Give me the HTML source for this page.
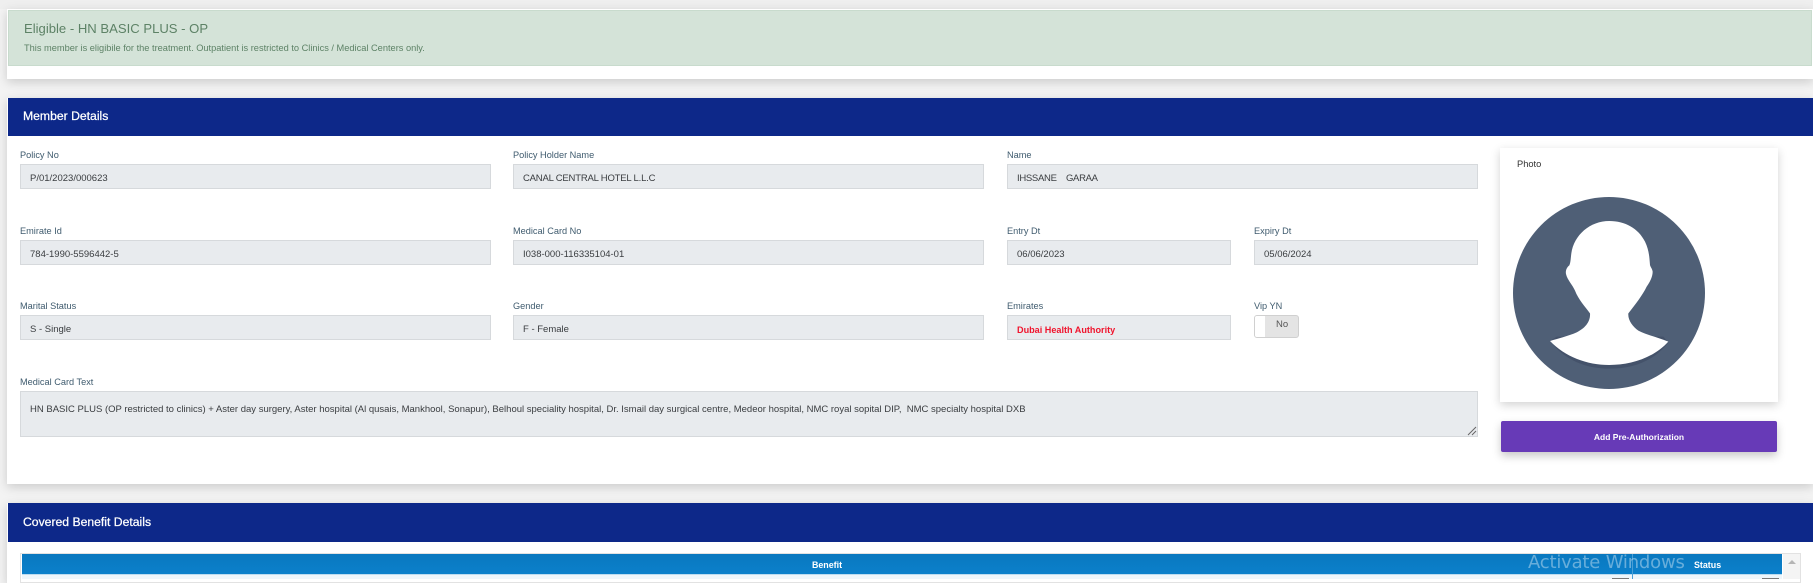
<!DOCTYPE html>
<html><head><meta charset="utf-8"><style>
html,body{margin:0;padding:0;width:1813px;height:579px;overflow:hidden;background:#f3f3f3;font-family:"Liberation Sans",Arial,sans-serif}
div{position:absolute;box-sizing:border-box;white-space:pre}
.card{background:#fff;box-shadow:0 3px 10px rgba(0,0,0,.17)}
.hd{background:#0d2889;left:8px;width:1805px;color:#fff;font-size:12.2px;font-weight:400;-webkit-text-stroke:.25px #fff}
.l{height:12px;line-height:12px;font-size:9.2px;color:#3f5b6e}
.f{background:#e8ebee;border:1px solid #d6d9dc;height:25px;line-height:28px;padding-left:9px;font-size:9.5px;color:#3a3d40}
</style></head><body>

<div style="left:0;top:0;width:1813px;height:9px;background:#efefef"></div>
<div class="card" style="left:7px;top:9px;width:1806px;height:70px"></div>
<div style="left:8px;top:10px;width:1804px;height:56px;background:#d4e3d8;border:1px solid #c8dbcd"></div>
<div style="left:24px;top:20px;height:17px;line-height:17px;font-size:13.1px;color:#5d8266">Eligible - HN BASIC PLUS - OP</div>
<div style="left:24px;top:42px;height:12px;line-height:12px;font-size:9.25px;color:#5d8266">This member is eligibile for the treatment. Outpatient is restricted to Clinics / Medical Centers only.</div>

<div class="card" style="left:7px;top:98px;width:1806px;height:386px"></div>
<div class="hd" style="top:98px;height:38px;line-height:37px;padding-left:15px">Member Details</div>

<div class="l" style="left:20px;top:149px">Policy No</div>
<div class="f" style="left:20px;top:164px;width:471px">P/01/2023/000623</div>
<div class="l" style="left:513px;top:149px">Policy Holder Name</div>
<div class="f" style="left:513px;top:164px;width:471px;letter-spacing:-.2px">CANAL CENTRAL HOTEL L.L.C</div>
<div class="l" style="left:1007px;top:149px">Name</div>
<div class="f" style="left:1007px;top:164px;width:471px;letter-spacing:-.3px">IHSSANE    GARAA</div>

<div class="l" style="left:20px;top:225px">Emirate Id</div>
<div class="f" style="left:20px;top:240px;width:471px">784-1990-5596442-5</div>
<div class="l" style="left:513px;top:225px">Medical Card No</div>
<div class="f" style="left:513px;top:240px;width:471px">I038-000-116335104-01</div>
<div class="l" style="left:1007px;top:225px">Entry Dt</div>
<div class="f" style="left:1007px;top:240px;width:224px">06/06/2023</div>
<div class="l" style="left:1254px;top:225px">Expiry Dt</div>
<div class="f" style="left:1254px;top:240px;width:224px">05/06/2024</div>

<div class="l" style="left:20px;top:300px">Marital Status</div>
<div class="f" style="left:20px;top:315px;width:471px">S - Single</div>
<div class="l" style="left:513px;top:300px">Gender</div>
<div class="f" style="left:513px;top:315px;width:471px">F - Female</div>
<div class="l" style="left:1007px;top:300px">Emirates</div>
<div class="f" style="left:1007px;top:315px;width:224px;color:#f0142d;font-weight:bold;font-size:9.1px">Dubai Health Authority</div>
<div class="l" style="left:1254px;top:300px">Vip YN</div>
<div style="left:1254px;top:315px;width:45px;height:23px;background:#e4e4e4;border:1px solid #d0d0d0;border-radius:3px;font-size:9.5px;color:#555;line-height:18px;padding-left:21px">No</div>
<div style="left:1255px;top:316px;width:10px;height:21px;background:#fff;border-radius:2px 0 0 2px"></div>

<div class="l" style="left:20px;top:376px">Medical Card Text</div>
<div class="f" style="left:20px;top:391px;width:1458px;height:46px;line-height:13px;padding-top:11px">HN BASIC PLUS (OP restricted to clinics) + Aster day surgery, Aster hospital (Al qusais, Mankhool, Sonapur), Belhoul speciality hospital, Dr. Ismail day surgical centre, Medeor hospital, NMC royal sopital DIP,  NMC specialty hospital DXB</div>
<svg style="position:absolute;left:1467px;top:426px" width="10" height="10" viewBox="0 0 10 10"><path d="M1 9L9 1M5 9L9 5" stroke="#666" stroke-width="1" fill="none"/></svg>

<div style="left:1500px;top:148px;width:278px;height:254px;background:#fff;box-shadow:0 3px 9px rgba(0,0,0,.18)"></div>
<div style="left:1517px;top:158px;height:12px;line-height:12px;font-size:9.3px;color:#333">Photo</div>
<svg style="position:absolute;left:1450px;top:140px" width="363" height="330" viewBox="0 0 1089 990">
<circle cx="477" cy="459" r="288" fill="#4f5f76"/>
<path d="M300 603C345 662 410 686 478 686C545 686 610 666 655 607L640 590L320 590Z" fill="#44526a"/>
<path d="M478 243C420 243 372 285 364 340C362 355 362 368 358 376C350 382 346 392 348 402C352 420 368 435 375 452C385 478 405 500 420 520C422 545 405 565 380 577C355 588 325 595 300 603C345 650 410 675 478 675C540 675 610 655 655 605C625 592 590 585 565 572C548 560 533 540 535 520C555 495 578 465 590 440C598 428 608 412 608 395C606 385 601 380 600 375C598 350 597 330 585 305C565 265 525 243 478 243Z" fill="#fff"/>
</svg>
<div style="left:1501px;top:421px;width:276px;height:31px;background:#673ab7;border-radius:2px;box-shadow:0 4px 9px rgba(0,0,0,.22);color:#fff;font-size:8.5px;font-weight:bold;text-align:center;line-height:33px">Add Pre-Authorization</div>

<div class="card" style="left:7px;top:503px;width:1806px;height:80px"></div>
<div class="hd" style="top:503px;height:39px;line-height:38px;padding-left:15px">Covered Benefit Details</div>
<div style="left:20px;top:553px;width:1781px;height:30px;border:1px solid #e2e2e2;background:#fff"></div>
<div style="left:22px;top:554px;width:1760px;height:20px;background:linear-gradient(#0a78bf,#0b80cb)"></div>
<div style="left:22px;top:574px;width:1760px;height:5px;background:#eef6fb;border-top:1px solid #bcdcf0"></div>
<div style="left:1632px;top:554px;width:1px;height:25px;background:#4a9fd6"></div>
<div style="left:22px;top:559px;width:1610px;height:12px;line-height:12px;text-align:center;font-size:8.9px;font-weight:bold;color:#fff">Benefit</div>
<div style="left:1694px;top:559px;height:12px;line-height:12px;font-size:8.9px;font-weight:bold;color:#fff">Status</div>
<div style="left:1612px;top:578px;width:17px;height:1px;background:#777"></div>
<div style="left:1762px;top:578px;width:17px;height:1px;background:#777"></div>
<div style="left:1783px;top:554px;width:17px;height:25px;background:#f4f4f4"></div>
<svg style="position:absolute;left:1787px;top:559px" width="10" height="6"><path d="M1 5L5 1L9 5Z" fill="#b5b5b5"/></svg>
<div style="left:1528px;top:551px;height:24px;line-height:24px;font-size:18px;font-family:'DejaVu Sans',sans-serif;letter-spacing:-.2px;color:rgba(255,255,255,.38)">Activate Windows</div>
</body></html>
